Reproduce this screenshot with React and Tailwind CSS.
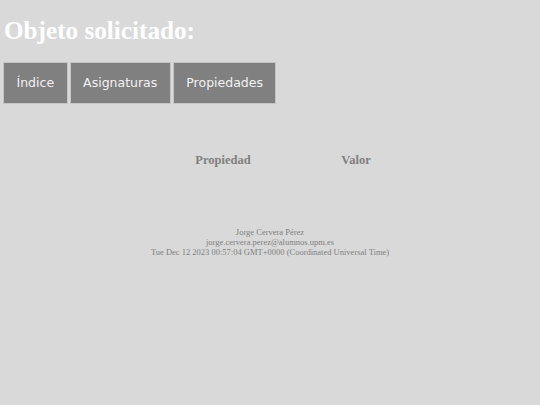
import React from "react";

const tabs = ["Índice", "Asignaturas", "Propiedades"];

export default function App() {
  return (
    <div className="min-h-[405px] bg-[#d9d9d9] font-['Liberation_Serif',serif]">
      <h1 className="pt-[16px] pl-[4px] text-[25.2px] leading-[29px] font-bold text-white">
        Objeto solicitado:
      </h1>

      {/* Tabs */}
      <nav className="mt-[17px] flex gap-[2px] pl-[3px]">
        {tabs.map((tab) => (
          <button
            key={tab}
            className="border border-[#c4c4c4] bg-[#808080] px-[12.5px] py-[12px] text-[12.5px] leading-[16px] text-[#f2f2f2] font-['DejaVu_Sans',sans-serif]"
          >
            {tab}
          </button>
        ))}
      </nav>

      {/* Properties table */}
      <table className="mx-auto mt-[48px] w-[270px]">
        <thead>
          <tr>
            <th className="w-[172px] pl-[4px] text-center text-[12.5px] leading-[16px] font-bold text-[#808080]">
              Propiedad
            </th>
            <th className="text-center text-[12.5px] leading-[16px] font-bold text-[#808080]">
              Valor
            </th>
          </tr>
        </thead>
        <tbody></tbody>
      </table>

      <footer className="mt-[59px] text-center text-[8.5px] leading-[10px] text-[#808080]">
        <p>Jorge Cervera Pérez</p>
        <p>jorge.cervera.perez@alumnos.upm.es</p>
        <p>Tue Dec 12 2023 00:57:04 GMT+0000 (Coordinated Universal Time)</p>
      </footer>
    </div>
  );
}
